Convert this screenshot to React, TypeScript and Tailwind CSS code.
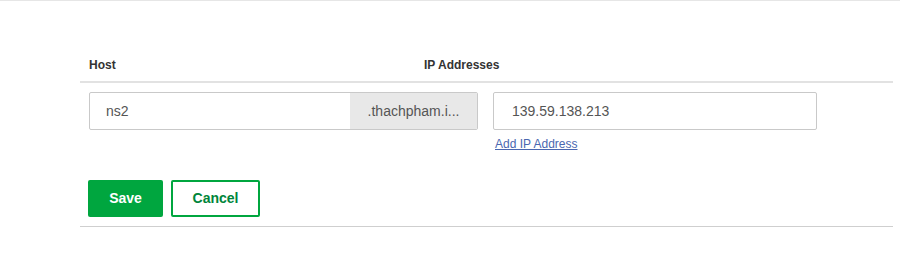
import React from "react";

export default function App() {
  return (
    <div className="w-[900px] h-[260px] bg-white border-t border-[#e6e6e6] overflow-hidden" style={{ fontFamily: '"Liberation Sans", Arial, sans-serif' }}>
      <div className="ml-[80px] w-[813px] pt-[56px]">
        <div className="flex h-[26px] pl-[9px] text-[12px] font-bold text-[#333] leading-[16px] border-b-2 border-[#e2e2e2]">
          <div className="w-[335px]">Host</div>
          <div>IP Addresses</div>
        </div>
        <div className="flex pl-[9px] mt-[9px] gap-[15px]">
          <div className="flex w-[389px] h-[38px] border border-[#c9c9c9] rounded-[2px] overflow-hidden">
            <div className="flex-1 flex items-center pl-[16px] text-[14px] text-[#555]">ns2</div>
            <div className="w-[127px] bg-[#e8e8e8] flex items-center justify-center text-[14px] text-[#555]">.thachpham.i...</div>
          </div>
          <div className="flex flex-col">
            <div className="w-[324px] h-[38px] border border-[#c9c9c9] rounded-[2px] flex items-center pl-[18px] text-[14px] text-[#555]">139.59.138.213</div>
            <a className="mt-[7px] ml-[2px] text-[12px] leading-[14px] text-[#4a67b0] underline">Add IP Address</a>
          </div>
        </div>
        <div className="flex pl-[8px] mt-[29px] gap-[8px] pb-[9px] border-b border-[#cfcfcf]">
          <button className="w-[75px] h-[37px] bg-[#00a63f] rounded-[2px] text-white text-[14px] font-bold">Save</button>
          <button className="w-[89px] h-[37px] border-2 border-[#00a63f] rounded-[2px] text-[#00853a] text-[14px] font-bold bg-white">Cancel</button>
        </div>
      </div>
    </div>
  );
}
